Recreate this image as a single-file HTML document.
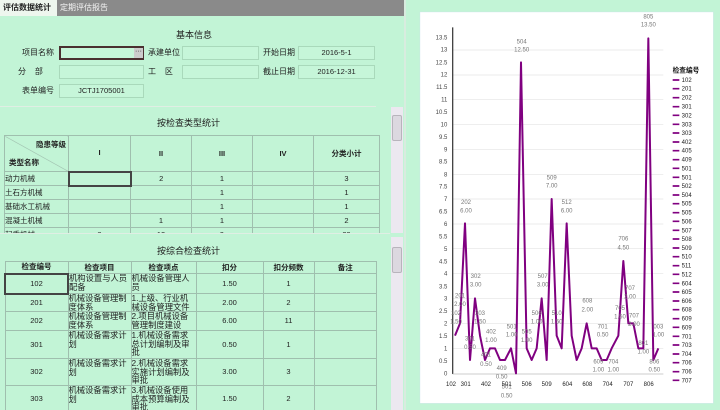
<!DOCTYPE html>
<html><head><meta charset="utf-8"><style>
*{margin:0;padding:0;box-sizing:border-box}
body{width:720px;height:410px;overflow:hidden;background:#c2f4d6;font-family:"Liberation Sans","Noto Sans CJK SC",sans-serif;font-size:8px;color:#222;position:relative}
.a{position:absolute}
.tabbar{left:0;top:0;width:404px;height:16px;background:#8a8a8a}
.inp{position:absolute;height:14px;border:1px solid #a9d9bb;background:#c6f6d9;text-align:center;line-height:12px;font-size:7.5px}
.lbl{position:absolute;font-size:8px}
.wrap{position:absolute;overflow:hidden}
table{border-collapse:collapse;table-layout:fixed;font-size:7.5px;line-height:8px}
td{border:1px solid #9fbfae;text-align:center;vertical-align:middle;padding:0;overflow:hidden}
td.l{text-align:left;vertical-align:top;padding-top:0;font-size:8.3px;line-height:8.5px}
.sb{position:absolute;left:391px;width:12px;background:#ece8f0}
.thumb{position:absolute;left:1px;width:10px;height:26px;background:#dcd8e0;border:1px solid #b8b4bc;border-radius:2px}
</style></head><body>
<div class="a tabbar"></div>
<div class="a" style="left:0;top:0;width:57px;height:16px;background:#eef6ee;font-weight:bold;font-size:8px;line-height:16px;padding-left:3px">评估数据统计</div>
<div class="a" style="left:60px;top:0;line-height:16px;color:#f4f4f4;font-size:8px">定期评估报告</div>
<div class="a" style="left:404px;top:0;width:2px;height:410px;background:#d8ecdf"></div>

<div class="a" style="left:176px;top:28px;font-size:9px">基本信息</div>
<div class="lbl" style="left:22px;top:47px">项目名称</div>
<div class="inp" style="left:59px;top:46px;width:85px;border:2px solid #4a3030"></div>
<div class="a" style="left:134px;top:48px;width:9px;height:10px;background:#ccc;font-size:7px;line-height:7px;text-align:center">···</div>
<div class="lbl" style="left:148px;top:47px">承建单位</div>
<div class="inp" style="left:182px;top:46px;width:77px"></div>
<div class="lbl" style="left:263px;top:47px">开始日期</div>
<div class="inp" style="left:298px;top:46px;width:77px">2016-5-1</div>
<div class="lbl" style="left:18px;top:66px">分 &nbsp; &nbsp;部</div>
<div class="inp" style="left:59px;top:65px;width:85px"></div>
<div class="lbl" style="left:148px;top:66px">工 &nbsp; &nbsp;区</div>
<div class="inp" style="left:182px;top:65px;width:77px"></div>
<div class="lbl" style="left:263px;top:66px">截止日期</div>
<div class="inp" style="left:298px;top:65px;width:77px">2016-12-31</div>
<div class="lbl" style="left:22px;top:85px">表单编号</div>
<div class="inp" style="left:59px;top:84px;width:85px">JCTJ1705001</div>
<div class="a" style="left:0;top:106px;width:376px;height:1px;background:#e0eee4"></div>

<div class="sb" style="top:107px;height:126px"><div class="thumb" style="top:8px"></div></div>
<div class="a" style="left:157px;top:116px;font-size:9px">按检查类型统计</div>
<div class="wrap" style="left:4px;top:135px;width:377px;height:98px">
<table style="width:376px">
<colgroup><col style="width:64px"><col style="width:62px"><col style="width:61px"><col style="width:61px"><col style="width:61px"><col></colgroup>
<tr style="height:36px"><td style="text-align:left;font-weight:bold;background:linear-gradient(to top right,transparent 49%,#9fbfae 50%,transparent 51%)"><div style="text-align:right;padding-right:2px">隐患等级</div><div style="margin-top:10px;padding-left:4px">类型名称</div></td><td style="font-weight:bold">I</td><td style="font-weight:bold">II</td><td style="font-weight:bold">III</td><td style="font-weight:bold">IV</td><td style="font-weight:bold">分类小计</td></tr>
<tr style="height:14px"><td style="text-align:left">动力机械</td><td style="border:2px solid #444"></td><td>2</td><td>1</td><td></td><td>3</td></tr>
<tr style="height:14px"><td style="text-align:left">土石方机械</td><td></td><td></td><td>1</td><td></td><td>1</td></tr>
<tr style="height:14px"><td style="text-align:left">基础水工机械</td><td></td><td></td><td>1</td><td></td><td>1</td></tr>
<tr style="height:14px"><td style="text-align:left">混凝土机械</td><td></td><td>1</td><td>1</td><td></td><td>2</td></tr>
<tr style="height:14px"><td style="text-align:left">起重机械</td><td>8</td><td>12</td><td>9</td><td></td><td>29</td></tr>
</table></div>
<div class="a" style="left:0;top:233px;width:390px;height:1px;background:#e0eee4"></div>

<div class="sb" style="top:237px;height:173px"><div class="thumb" style="top:10px"></div></div>
<div class="a" style="left:157px;top:244px;font-size:9px">按综合检查统计</div>
<div class="wrap" style="left:4px;top:261px;width:374px;height:149px">
<table style="width:373px">
<colgroup><col style="width:63px"><col style="width:63px"><col style="width:65px"><col style="width:67px"><col style="width:51px"><col></colgroup>
<tr style="height:12px;font-weight:bold"><td>检查编号</td><td>检查项目</td><td>检查项点</td><td>扣分</td><td>扣分频数</td><td>备注</td></tr>
<tr style="height:20px"><td style="border:2px solid #444">102</td><td class="l">机构设置与人员配备</td><td class="l">机械设备管理人员</td><td>1.50</td><td>1</td><td></td></tr>
<tr style="height:18px"><td>201</td><td class="l">机械设备管理制度体系</td><td class="l">1.上级、行业机械设备管理文件</td><td>2.00</td><td>2</td><td></td></tr>
<tr style="height:19px"><td>202</td><td class="l">机械设备管理制度体系</td><td class="l">2.项目机械设备管理制度建设</td><td>6.00</td><td>11</td><td></td></tr>
<tr style="height:28px"><td>301</td><td class="l">机械设备需求计划</td><td class="l">1.机械设备需求总计划编制及审批</td><td>0.50</td><td>1</td><td></td></tr>
<tr style="height:27px"><td>302</td><td class="l">机械设备需求计划</td><td class="l">2.机械设备需求实施计划编制及审批</td><td>3.00</td><td>3</td><td></td></tr>
<tr style="height:27px"><td>303</td><td class="l">机械设备需求计划</td><td class="l">3.机械设备使用成本预算编制及审批</td><td>1.50</td><td>2</td><td></td></tr>
</table></div>

<svg class="a" style="left:410px;top:0" width="310" height="410" viewBox="0 0 930 1230" font-family="Liberation Sans,Noto Sans CJK SC,sans-serif">
<rect x="30" y="36" width="880" height="1174" fill="#fff" stroke="#cde"/>
<g stroke="#e4e4e4" stroke-width="2">
<line x1="128" x2="760" y1="1045" y2="1045"/><line x1="128" x2="760" y1="970" y2="970"/><line x1="128" x2="760" y1="895" y2="895"/><line x1="128" x2="760" y1="821" y2="821"/><line x1="128" x2="760" y1="746" y2="746"/><line x1="128" x2="760" y1="672" y2="672"/><line x1="128" x2="760" y1="597" y2="597"/><line x1="128" x2="760" y1="523" y2="523"/><line x1="128" x2="760" y1="448" y2="448"/><line x1="128" x2="760" y1="374" y2="374"/><line x1="128" x2="760" y1="299" y2="299"/><line x1="128" x2="760" y1="225" y2="225"/><line x1="128" x2="760" y1="150" y2="150"/>
</g>
<line x1="128" y1="82" x2="128" y2="1122" stroke="#444" stroke-width="4"/>
<line x1="128" x2="760" y1="1122" y2="1122" stroke="#bbb" stroke-width="2"/>
<g font-size="18" fill="#444" text-anchor="end">
<text x="112" y="1126">0</text><text x="112" y="1089">0.5</text><text x="112" y="1051">1</text><text x="112" y="1014">1.5</text><text x="112" y="977">2</text><text x="112" y="939">2.5</text><text x="112" y="902">3</text><text x="112" y="865">3.5</text><text x="112" y="827">4</text><text x="112" y="790">4.5</text><text x="112" y="753">5</text><text x="112" y="715">5.5</text><text x="112" y="678">6</text><text x="112" y="641">6.5</text><text x="112" y="603">7</text><text x="112" y="566">7.5</text><text x="112" y="529">8</text><text x="112" y="491">8.5</text><text x="112" y="454">9</text><text x="112" y="417">9.5</text><text x="112" y="379">10</text><text x="112" y="342">10.5</text><text x="112" y="305">11</text><text x="112" y="267">11.5</text><text x="112" y="230">12</text><text x="112" y="193">12.5</text><text x="112" y="155">13</text><text x="112" y="118">13.5</text>
</g>
<polyline fill="none" stroke="#800080" stroke-width="6" stroke-linejoin="round" points="135,1007 150,970 165,670 180,1080 195,895 210,1007 225,1080 240,1045 255,1045 270,1080 285,1080 303,1045 318,1120 333,187 350,1045 365,1080 380,1045 395,895 410,1080 425,597 440,1007 455,1045 470,670 485,1007 500,1080 515,1045 530,970 545,1045 560,1045 575,1080 590,1080 605,1045 625,1007 640,783 655,970 670,970 685,1045 700,1045 715,115 730,1080 745,1045"/>
<g font-size="18" fill="#777" text-anchor="middle">
<text x="168" y="612">202</text><text x="168" y="638">6.00</text>
<text x="335" y="130">504</text><text x="335" y="155">12.50</text>
<text x="715" y="55">805</text><text x="715" y="80">13.50</text>
<text x="425" y="538">509</text><text x="425" y="563">7.00</text>
<text x="470" y="612">512</text><text x="470" y="638">6.00</text>
<text x="640" y="722">706</text><text x="640" y="748">4.50</text>
<text x="197" y="834">302</text><text x="197" y="860">3.00</text>
<text x="398" y="834">507</text><text x="398" y="860">3.00</text>
<text x="532" y="908">608</text><text x="532" y="934">2.00</text>
<text x="150" y="893">201</text><text x="150" y="918">2.00</text>
<text x="138" y="945">102</text><text x="138" y="970">1.50</text>
<text x="210" y="945">303</text><text x="210" y="970">1.50</text>
<text x="180" y="1022">301</text><text x="180" y="1047">0.50</text>
<text x="243" y="1000">402</text><text x="243" y="1026">1.00</text>
<text x="305" y="985">501</text><text x="305" y="1010">1.00</text>
<text x="350" y="1000">505</text><text x="350" y="1026">1.00</text>
<text x="380" y="945">506</text><text x="380" y="970">1.00</text>
<text x="440" y="945">510</text><text x="440" y="970">1.50</text>
<text x="578" y="985">701</text><text x="578" y="1010">0.50</text>
<text x="630" y="930">705</text><text x="630" y="955">1.50</text>
<text x="660" y="870">707</text><text x="660" y="895">2.00</text>
<text x="672" y="952">707</text><text x="672" y="978">2.00</text>
<text x="745" y="985">003</text><text x="745" y="1010">1.00</text>
<text x="733" y="1090">806</text><text x="733" y="1115">0.50</text>
<text x="700" y="1035">801</text><text x="700" y="1060">1.00</text>
<text x="565" y="1090">609</text><text x="565" y="1115">1.00</text>
<text x="610" y="1090">704</text><text x="610" y="1115">1.00</text>
<text x="228" y="1070">401</text><text x="228" y="1098">0.50</text>
<text x="275" y="1110">409</text><text x="275" y="1136">0.50</text>
<text x="290" y="1165">501</text><text x="290" y="1192">0.50</text>
</g>
<g font-size="18" fill="#222" text-anchor="middle">
<text x="123" y="1158">102</text><text x="167" y="1158">301</text><text x="228" y="1158">402</text><text x="290" y="1158">501</text><text x="350" y="1158">506</text><text x="410" y="1158">509</text><text x="472" y="1158">604</text><text x="532" y="1158">608</text><text x="593" y="1158">704</text><text x="655" y="1158">707</text><text x="716" y="1158">806</text>
</g>
<text x="788" y="218" font-size="20" font-weight="bold" fill="#111">检查编号</text>
<g font-size="18" fill="#222">
<text x="815" y="246">102</text><text x="815" y="272">201</text><text x="815" y="299">202</text><text x="815" y="326">301</text><text x="815" y="352">302</text><text x="815" y="379">303</text><text x="815" y="405">303</text><text x="815" y="432">402</text><text x="815" y="458">405</text><text x="815" y="485">409</text><text x="815" y="511">501</text><text x="815" y="538">501</text><text x="815" y="564">502</text><text x="815" y="591">504</text><text x="815" y="617">505</text><text x="815" y="644">505</text><text x="815" y="670">506</text><text x="815" y="697">507</text><text x="815" y="723">508</text><text x="815" y="750">509</text><text x="815" y="776">510</text><text x="815" y="803">511</text><text x="815" y="829">512</text><text x="815" y="856">604</text><text x="815" y="882">605</text><text x="815" y="909">606</text><text x="815" y="935">608</text><text x="815" y="962">609</text><text x="815" y="988">609</text><text x="815" y="1015">701</text><text x="815" y="1041">703</text><text x="815" y="1068">704</text><text x="815" y="1094">706</text><text x="815" y="1121">706</text><text x="815" y="1147">707</text>
</g>
<g stroke="#800080" stroke-width="5">
<path d="M788 240h20M788 266h20M788 293h20M788 320h20M788 346h20M788 373h20M788 399h20M788 426h20M788 452h20M788 479h20M788 505h20M788 532h20M788 558h20M788 585h20M788 611h20M788 638h20M788 664h20M788 691h20M788 717h20M788 744h20M788 770h20M788 797h20M788 823h20M788 850h20M788 876h20M788 903h20M788 929h20M788 956h20M788 982h20M788 1009h20M788 1035h20M788 1062h20M788 1088h20M788 1115h20M788 1141h20"/>
</g>
</svg>
</body></html>
